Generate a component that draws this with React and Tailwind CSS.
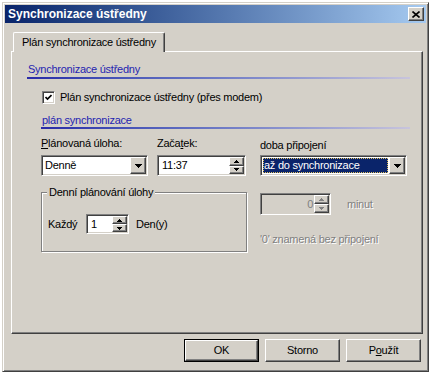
import React from "react";

const raised =
  "border border-t-white border-l-white border-r-[#404040] border-b-[#404040] shadow-[inset_-1px_-1px_0_#808080] bg-[#d4d0c8]";
const sunken =
  "border border-t-[#808080] border-l-[#808080] border-r-white border-b-white shadow-[inset_1px_1px_0_#404040,inset_-1px_-1px_0_#d4d0c8]";

const DownArrow = () => (
  <svg width="7" height="4" viewBox="0 0 7 4">
    <rect x="0" y="0" width="7" height="1" fill="#000" />
    <rect x="1" y="1" width="5" height="1" fill="#000" />
    <rect x="2" y="2" width="3" height="1" fill="#000" />
    <rect x="3" y="3" width="1" height="1" fill="#000" />
  </svg>
);

const SmallArrow = ({ up, disabled }) => {
  const c = disabled ? "#808080" : "#000";
  return (
    <svg width="5" height="3" viewBox="0 0 5 3">
      {up ? (
        <>
          <rect x="2" y="0" width="1" height="1" fill={c} />
          <rect x="1" y="1" width="3" height="1" fill={c} />
          <rect x="0" y="2" width="5" height="1" fill={c} />
        </>
      ) : (
        <>
          <rect x="0" y="0" width="5" height="1" fill={c} />
          <rect x="1" y="1" width="3" height="1" fill={c} />
          <rect x="2" y="2" width="1" height="1" fill={c} />
        </>
      )}
    </svg>
  );
};

const Spinner = ({ disabled }) => (
  <div className="flex flex-col w-[15px] h-full">
    <div className={`${raised} flex-1 flex items-center justify-center`}>
      <SmallArrow up disabled={disabled} />
    </div>
    <div className={`${raised} flex-1 flex items-center justify-center`}>
      <SmallArrow disabled={disabled} />
    </div>
  </div>
);

const Combo = ({ value, selected, className }) => (
  <div className={`${sunken} ${className} flex p-[1px] bg-white`}>
    {selected ? (
      <div className="flex-1 flex items-center p-[1px]">
        <div className="flex-1 h-full flex items-center pl-[1px] bg-[#0a246a] text-white outline outline-1 outline-dotted outline-[#e0c060] -outline-offset-1">
          {value}
        </div>
      </div>
    ) : (
      <div className="flex-1 flex items-center pl-[2px]">{value}</div>
    )}
    <div className={`${raised} w-[16px] flex items-center justify-center`}>
      <DownArrow />
    </div>
  </div>
);

const SpinEdit = ({ value, className, right, disabled }) => (
  <div
    className={`${sunken} ${className} flex p-[1px] ${
      disabled ? "bg-[#d4d0c8]" : "bg-white"
    }`}
  >
    <div
      className={`flex-1 flex items-center ${
        right ? "justify-end pr-[1px]" : "pl-[3px]"
      } ${disabled ? "text-[#808080]" : ""}`}
    >
      {value}
    </div>
    <Spinner disabled={disabled} />
  </div>
);

const Button = ({ children, isDefault }) => (
  <div
    className={`w-[75px] h-[23px] ${
      isDefault ? "border border-black p-0" : ""
    } bg-[#d4d0c8]`}
  >
    <div
      className={`${raised} w-full h-full flex items-center justify-center`}
    >
      {children}
    </div>
  </div>
);

export default function App() {
  return (
    <div className="w-[435px] h-[377px] bg-white pt-[2px] pl-[2px] font-['Liberation_Sans',Arial,sans-serif] text-[11px] leading-[13px] tracking-[-0.25px] text-black">
      <div className="w-[427px] h-[370px] bg-[#d4d0c8] border border-t-[#d4d0c8] border-l-[#d4d0c8] border-r-[#404040] border-b-[#404040] p-[2px] shadow-[inset_1px_1px_0_white,inset_-1px_-1px_0_#808080]">
        {/* Title bar */}
        <div className="h-[18px] flex items-center justify-between bg-gradient-to-r from-[#0a246a] to-[#a6caf0] pl-[3px] pr-[2px]">
          <span className="text-white font-bold text-[12px] tracking-normal">
            Synchronizace ústředny
          </span>
          <div className={`${raised} w-[16px] h-[14px] flex items-center justify-center`}>
            <svg width="8" height="7" viewBox="0 0 8 7">
              <path d="M0.5 0.5 L7.5 6.5 M7.5 0.5 L0.5 6.5" stroke="#000" strokeWidth="1.6" />
            </svg>
          </div>
        </div>

        {/* Tabs */}
        <div className="ml-[6px] mt-[9px]">
          <div className="ml-[2px] relative z-10 -mb-[1px] w-[152px] h-[20px] bg-[#d4d0c8] border-t border-l border-r border-t-white border-l-white border-r-[#404040] shadow-[inset_-1px_0_0_#808080] rounded-t-[2px] flex items-center pl-[8px]">
            Plán synchronizace ústředny
          </div>
          <div className="w-[412px] h-[283px] border border-t-white border-l-white border-r-[#404040] border-b-[#404040] shadow-[inset_-1px_-1px_0_#808080] pl-[16px] pt-[11px]">
            <div className="text-[#2424b0]">Synchronizace ústředny</div>
            <div className="-ml-[1px] mt-[1px] w-[383px] h-[2px] bg-gradient-to-r from-[#2a2aa8] to-[#c8c4dc]" />

            <div className="mt-[12px] ml-[14px] flex items-center h-[13px]">
              <div className={`${sunken} w-[13px] h-[13px] bg-white flex items-center justify-center`}>
                <svg width="7" height="7" viewBox="0 0 7 7">
                  <path d="M0.5 3 L2.5 5 L6.5 1" stroke="#000" strokeWidth="1.7" fill="none" />
                </svg>
              </div>
              <span className="ml-[5px]">
                Plán synchronizace ústředny (přes modem)
              </span>
            </div>

            <div className="mt-[10px] ml-[14px] text-[#2424b0]">
              plán synchronizace
            </div>
            <div className="ml-[13px] w-[369px] h-[2px] bg-gradient-to-r from-[#2a2aa8] to-[#c8c4dc]" />

            <div className="ml-[13px] mt-[8px] flex gap-[13px]">
              {/* Left part */}
              <div className="w-[206px]">
                <div className="flex">
                  <span className="w-[116px]">
                    <u>P</u>lánovaná úloha:
                  </span>
                  <span>
                    Zača<u>t</u>ek:
                  </span>
                </div>
                <div className="flex mt-[5px]">
                  <Combo value="Denně" className="w-[107px] h-[21px]" />
                  <SpinEdit value="11:37" className="ml-[9px] w-[89px] h-[21px]" />
                </div>
                <fieldset className="mt-[10px] h-[66px] w-[206px] border border-[#808080] shadow-[1px_1px_0_white,inset_1px_1px_0_white]">
                  <legend className="ml-[5px] px-[2px] bg-[#d4d0c8]">
                    Denní plánování úlohy
                  </legend>
                  <div className="mt-[15px] pl-[6px] flex items-center">
                    <span className="w-[38px]">Každý</span>
                    <SpinEdit value="1" className="w-[43px] h-[20px]" />
                    <span className="ml-[7px]">Den(y)</span>
                  </div>
                </fieldset>
              </div>

              {/* Right part */}
              <div className="w-[147px]">
                <div className="mt-[2px]">doba připojení</div>
                <Combo
                  value="až do synchronizace"
                  selected
                  className="mt-[3px] w-[147px] h-[21px]"
                />
                <div className="mt-[17px] flex items-center">
                  <SpinEdit value="0" right disabled className="w-[71px] h-[22px]" />
                  <span className="ml-[16px] text-[#808080] [text-shadow:1px_1px_0_white]">
                    minut
                  </span>
                </div>
                <div className="mt-[18px] text-[#808080] [text-shadow:1px_1px_0_white] whitespace-nowrap">
                  '0' znamená bez připojení
                </div>
              </div>
            </div>
          </div>
        </div>

        {/* Buttons */}
        <div className="mt-[5px] flex justify-end gap-[6px] pr-[5px]">
          <Button isDefault>OK</Button>
          <Button>Storno</Button>
          <Button>
            P<u>o</u>užít
          </Button>
        </div>
      </div>
    </div>
  );
}
